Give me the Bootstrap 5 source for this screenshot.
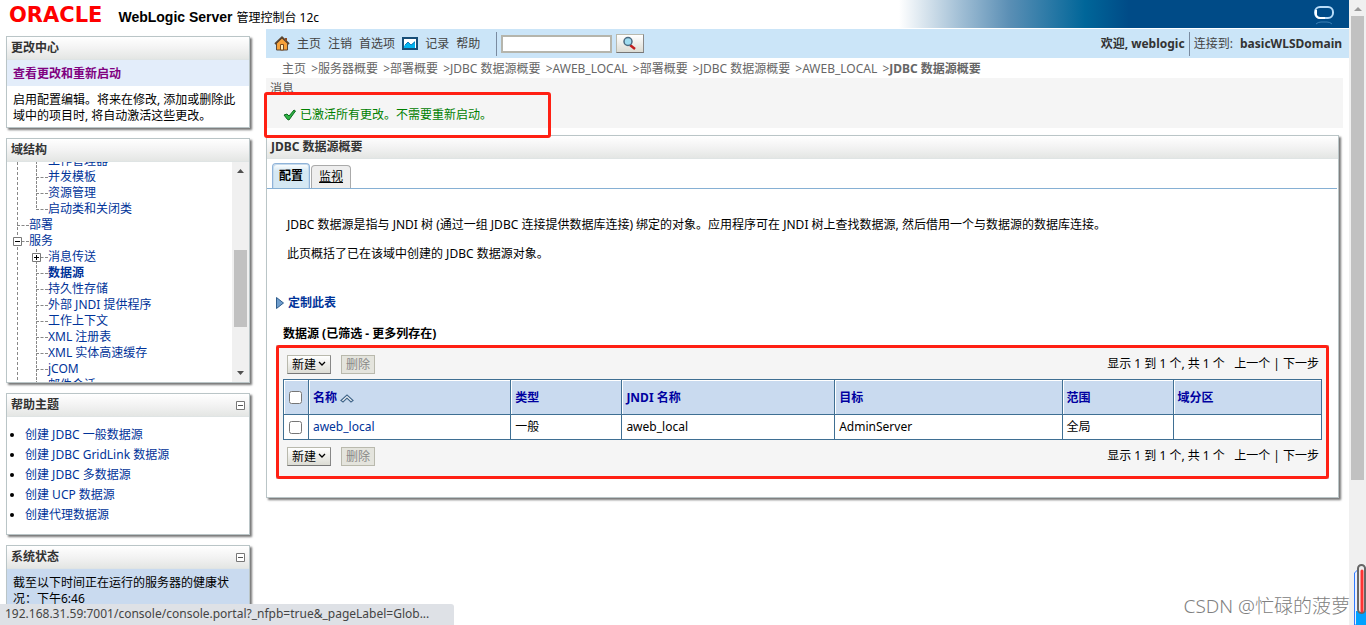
<!DOCTYPE html>
<html lang="zh-CN">
<head>
<meta charset="utf-8">
<meta name="viewport" content="width=device-width, initial-scale=1">
<title>JDBC 数据源概要 - WebLogic Server 管理控制台</title>
<link href="https://cdn.jsdelivr.net/npm/bootstrap@5.3.0/dist/css/bootstrap.min.css" rel="stylesheet">
<style>
  body { font: 12px/16px "Noto Sans", "Noto Sans CJK SC", sans-serif; color: #000; background: #fff; }
  a { color: #003399; text-decoration: none; }
  a:hover { text-decoration: underline; }
  svg { flex: none; }

  /* Brand bar */
  .brand-bar { height: 29px; border-bottom: 1px solid #fff; padding: 2px 14px 0 9px; gap: 16px;
    background: linear-gradient(to left, #004b87 0 220px, #006699 264px, #5b8fb5 340px, #a3c0d6 390px, #fff 450px); }
  .oracle-mark { font: bold 21px/26px "DejaVu Sans", sans-serif; color: #f00; }
  .product-name { font: bold 14px/26px "Liberation Sans", sans-serif; padding-top: 4px; }
  .product-name small { font: 12px/26px "Noto Sans", "Noto Sans CJK SC", sans-serif; }

  /* Panels */
  .side-col { width: 244px; margin-left: 6px; gap: 10px; padding-top: 7px; flex: none; }
  .panel { border: 1px solid #bac5c7; box-shadow: 2px 2px 2px #777; background: #fff; flex: none; }
  .panel-title { font-size: 12px; line-height: 16px; font-weight: bold; color: #333; margin: 0; padding: 3px 4px;
    background: linear-gradient(#fff, #f3f3f3 50%, #e4e6e4); border-bottom: 1px solid #dfe4e4; height: 23px; }
  .change-link { background: #e3edfa; padding: 6px 6px 4px; }
  .change-link a { color: #800080; font-weight: bold; }
  .change-note { padding: 6px 6px 3px; margin: 0; }

  /* Domain tree */
  .tree-box { height: 220px; overflow: hidden; }
  .tree-list { margin: 0; padding: 2px 0 0; list-style: none; min-width: 0;
    background: repeating-linear-gradient(#888 0 3px, transparent 3px 5px) 10px 0 / 1px 100% no-repeat; }
  .tree-row { height: 16px; flex: none; display: flex; align-items: center; white-space: nowrap; padding-left: 10px; }
  .tree-row::before { content: ""; width: 12px; border-top: 1px dashed #888; }
  .tree-row.sub { padding-left: 29px; background: repeating-linear-gradient(#888 0 3px, transparent 3px 4px) 29px 0 / 1px 16px no-repeat; }
  .tree-row.final { background-size: 1px 9px; }
  .tree-row svg { margin: 0 -5px 0 -4px; order: -1; z-index: 1; }
  .inner-scroll { width: 17px; background: #f0f0f0; padding: 6px 2px; flex: none; }
  .inner-thumb { height: 77px; margin: 77px 0 40px; background: #c1c1c1; }
  .help-list { margin: 0; padding: 8px 0 9px 18px; }
  .help-list li { line-height: 20px; }
  .help-list li::marker { font-size: 12px; }
  .status-body { background: #c9daef; padding: 6px; min-height: 90px; }

  /* Tool bar and location */
  .work-col { margin-left: 16px; min-width: 0; }
  .tool-bar { background: #cbe5f8; height: 29px; padding: 0 7px 0 8px; color: #444; }
  .tool-links { gap: 7px; }
  .tool-bar a { color: #444; }
  .tool-bar b { color: #333; }
  .bar-line { width: 1px; height: 24px; background: #7a8ba0; }
  .search-box { width: 111px; height: 18px; border: 2px solid #b5b5ac; padding: 0 2px; font-size: 12px; background: #fff; }
  .gray-btn { border: 1px solid #b9b9ad; border-right-color: #888; border-bottom-color: #777; background: linear-gradient(#fff, #dcdcd4);
    padding: 0 4px; font-size: 12px; line-height: 17px; height: 19px; color: #000; display: flex; align-items: center; gap: 2px; }
  .gray-btn:disabled { color: #888; background: #e4e4dd; border-color: #b9b9ad; }
  .crumbs { padding: 3px 16px 1px; color: #666; white-space: nowrap; overflow: hidden; }
  .crumbs a { color: #666; margin-right: 2px; }
  .messages { background: #f5f5f5; margin-right: 6px; height: 50px; padding: 3px 4px; color: #555; }
  .message-ok { color: #008000; padding: 10px 0 0 13px; gap: 4px; }
  .red-frame { border: 3px solid #ff2013; border-radius: 3px; pointer-events: none; }
  .frame-message { left: -2px; top: 14px; width: 287px; height: 46px; z-index: 2; }
  .frame-table { inset: -1px; }

  /* Data source panel */
  .main-panel { margin: 7px 10px 0 0; padding-bottom: 18px; }
  .tab-row { border-bottom: 1px solid #86b0d4; margin-right: 1px; padding-left: 5px; height: 30px; gap: 1px; }
  .tab-link { height: 23px; border: 1px solid #aaa; border-bottom: 0; border-radius: 4px 4px 0 0; background: #eee; padding: 3px 7px; color: #000; text-decoration: underline; }
  .tab-link.current { height: 25px; border-color: #8fb3d9; font-weight: bold; background: linear-gradient(#fff, #d5e8f3 30%); padding: 4px 6px 3px; text-decoration: none; box-shadow: inset 1px 1px #c5daec, inset -1px 0 #c5daec; }
  .intro { padding: 28px 20px 0; }
  .intro p { margin: 0 0 13px; }
  .custom-link { padding: 20px 0 0 9px; font-weight: bold; gap: 4px; }
  .table-name { margin: 15px 0 3px 16px; font-weight: bold; }
  .table-zone { margin: 0 9px; background: #f5f5f5; padding: 0 6px; border: 1px solid #ccc; }
  .table-tools { height: 33px; padding: 3px 3px 0 4px; gap: 10px; }
  .table-zone table + .table-tools { height: 38px; padding: 0 3px 6px 4px; }
  .grid-data { table-layout: fixed; width: 100%; border-collapse: collapse; background: #fff; }
  .grid-data th, .grid-data td { border: 1px solid #3f6f93; padding: 0 4px; white-space: nowrap; overflow: hidden; }
  .grid-data th { height: 35px; background: #c9daef; padding-top: 2px; box-shadow: inset 1px 1px #fff; }
  .grid-data th, .grid-data th a { color: #0000a0; }
  .grid-data td { height: 25px; }
  .grid-data .check-cell { padding: 0; text-align: center; }
  .grid-data input { width: 13px; height: 13px; vertical-align: middle; margin: 0; }

  /* Window furniture */
  .page-scroll { width: 17px; background: #f0f0f0; padding-top: 7px; flex: none; }
  .page-thumb { width: 13px; height: 75%; margin-top: 5px; background: #c1c1c1; }
  .status-bubble { left: 0; bottom: 0; width: 454px; height: 21px; background: #dee1e6; color: #444; border-top-right-radius: 3px; padding: 1px 5px;
    font: 12px/18px "Noto Sans", sans-serif; white-space: nowrap; z-index: 3; }
  .watermark { right: 16px; bottom: 6px; font: 300 19px/26px "Noto Sans", "Noto Sans CJK SC", sans-serif; color: #808080; }
  .side-widget { right: 0; bottom: 0; }
</style>
</head>
<body class="vh-100 overflow-hidden">
<div class="d-flex vh-100 position-relative">
  <div class="flex-fill overflow-hidden">
    <header class="brand-bar d-flex align-items-center">
      <span class="oracle-mark">ORACLE</span>
      <span class="product-name">WebLogic Server <small>管理控制台 12c</small></span>
      <svg class="ms-auto" width="22" height="22" viewBox="0 0 22 22" fill="none"><rect x="2" y="3" width="18" height="11" rx="5" stroke="#b9dcf8" stroke-width="2"/><path d="M3 6v5q1 3 4 3h5" stroke="#fff" stroke-width="2"/><path d="M3 20q2-2 5-2h6q3 0 5 2" stroke="#3a80b5"/></svg>
    </header>
    <div class="d-flex">
      <aside class="side-col d-flex flex-column">
        <section class="panel">
          <h2 class="panel-title">更改中心</h2>
          <div class="change-link"><a href="#">查看更改和重新启动</a></div>
          <p class="change-note">启用配置编辑。将来在修改, 添加或删除此域中的项目时, 将自动激活这些更改。</p>
        </section>
        <section class="panel">
          <h2 class="panel-title">域结构</h2>
          <div class="tree-box d-flex">
            <ul class="tree-list flex-fill d-flex flex-column justify-content-center">
              <li class="tree-row sub"><a href="#">工作管理器</a></li>
              <li class="tree-row sub"><a href="#">并发模板</a></li>
              <li class="tree-row sub"><a href="#">资源管理</a></li>
              <li class="tree-row sub final"><a href="#">启动类和关闭类</a></li>
              <li class="tree-row"><a href="#">部署</a></li>
              <li class="tree-row"><svg width="9" height="9"><path d="M.5.5h8v8h-8z" fill="#fff" stroke="#777"/><path d="M2 4.5h5" stroke="#000"/></svg><a href="#">服务</a></li>
              <li class="tree-row sub"><svg width="9" height="9"><path d="M.5.5h8v8h-8z" fill="#fff" stroke="#777"/><path d="M2 4.5h5M4.500 2v5" stroke="#000"/></svg><a href="#">消息传送</a></li>
              <li class="tree-row sub"><a href="#"><b>数据源</b></a></li>
              <li class="tree-row sub"><a href="#">持久性存储</a></li>
              <li class="tree-row sub"><a href="#">外部 JNDI 提供程序</a></li>
              <li class="tree-row sub"><a href="#">工作上下文</a></li>
              <li class="tree-row sub"><a href="#">XML 注册表</a></li>
              <li class="tree-row sub"><a href="#">XML 实体高速缓存</a></li>
              <li class="tree-row sub"><a href="#">jCOM</a></li>
              <li class="tree-row sub"><a href="#">邮件会话</a></li>
            </ul>
            <div class="inner-scroll d-flex flex-column">
              <svg class="mx-auto" width="7" height="5"><path d="M0 5 3.500 1 7 5z" fill="#505050"/></svg>
              <div class="inner-thumb"></div>
              <svg class="mx-auto mt-auto" width="7" height="5"><path d="M0 0h7L3.500 4z" fill="#505050"/></svg>
            </div>
          </div>
        </section>
        <section class="panel">
          <h2 class="panel-title d-flex justify-content-between">帮助主题<svg class="mt-1" width="9" height="9"><path d="M.5.5h8v8h-8z" fill="#fff" stroke="#777"/><path d="M2 4.500h5" stroke="#555"/></svg></h2>
          <ul class="help-list">
            <li><a href="#">创建 JDBC 一般数据源</a></li>
            <li><a href="#">创建 JDBC GridLink 数据源</a></li>
            <li><a href="#">创建 JDBC 多数据源</a></li>
            <li><a href="#">创建 UCP 数据源</a></li>
            <li><a href="#">创建代理数据源</a></li>
          </ul>
        </section>
        <section class="panel">
          <h2 class="panel-title d-flex justify-content-between">系统状态<svg class="mt-1" width="9" height="9"><path d="M.5.5h8v8h-8z" fill="#fff" stroke="#777"/><path d="M2 4.500h5" stroke="#555"/></svg></h2>
          <div class="status-body">截至以下时间正在运行的服务器的健康状况：下午6:46</div>
        </section>
      </aside>

      <main class="work-col flex-fill">
        <nav class="tool-bar d-flex align-items-center">
          <div class="tool-links d-flex align-items-center">
            <svg width="16" height="15" viewBox="0 0 16 15"><path d="M2.500 7v7h11V7L8 2z" fill="#f7a23b" stroke="#5b4a3a"/><path d="M1 8 8 1.300 15 8" fill="none" stroke="#5a4632" stroke-width="1.800"/><path d="M12 2v3" stroke="#8a4b25" stroke-width="2"/><path d="M6.500 14V8.500h3V14z" fill="#fff0c0" stroke="#7b4a1e"/></svg>
            <a href="#">主页</a><a href="#">注销</a><a href="#">首选项</a>
            <a class="d-flex align-items-center" href="#"><svg class="me-1" width="16" height="13"><path d="M1 1h14v11H1z" fill="#fff" stroke="#174e78" stroke-width="2"/><path d="M2 9 6 5l3 3 4-4v7H2z" fill="#00b4f0"/><path d="m3 8 3-3 3 3 4-3" fill="none" stroke="#1679b8"/></svg>&nbsp;记录</a>
            <a href="#">帮助</a>
          </div>
          <span class="bar-line me-1 ms-3"></span>
          <input class="search-box" type="text" aria-label="搜索">
          <button class="gray-btn ms-1" type="button" aria-label="搜索"><svg width="18" height="15"><path d="m9 9 5 4" stroke="#c21c1c" stroke-width="2.500"/><circle cx="7" cy="5.500" r="4" fill="#9fdcf0" stroke="#4b6a80" stroke-width="1.500"/></svg></button>
          <span class="ms-auto"><b>欢迎, weblogic</b></span>
          <span class="bar-line mx-1"></span>
          <span>连接到: <b class="ms-1">basicWLSDomain</b></span>
        </nav>
        <div class="crumbs"><a href="#">主页</a> &gt;<a href="#">服务器概要</a> &gt;<a href="#">部署概要</a> &gt;<a href="#">JDBC 数据源概要</a> &gt;<a href="#">AWEB_LOCAL</a> &gt;<a href="#">部署概要</a> &gt;<a href="#">JDBC 数据源概要</a> &gt;<a href="#">AWEB_LOCAL</a> &gt;<b>JDBC 数据源概要</b></div>
        <section class="messages position-relative">
          <div>消息</div>
          <div class="message-ok d-flex align-items-center"><svg width="13" height="12"><path d="m1 6 3-1 2 2 5-6 1.500 1L6 11 4.500 10.500z" fill="#2fb344" stroke="#0b6a1e"/></svg>已激活所有更改。不需要重新启动。</div>
          <div class="red-frame frame-message position-absolute"></div>
        </section>

        <section class="panel main-panel">
          <h1 class="panel-title">JDBC 数据源概要</h1>
          <div class="tab-row d-flex align-items-end"><a class="tab-link current" href="#">配置</a><a class="tab-link" href="#">监视</a></div>
          <div class="intro">
            <p>JDBC 数据源是指与 JNDI 树 (通过一组 JDBC 连接提供数据库连接) 绑定的对象。应用程序可在 JNDI 树上查找数据源, 然后借用一个与数据源的数据库连接。</p>
            <p>此页概括了已在该域中创建的 JDBC 数据源对象。</p>
          </div>
          <div class="custom-link d-flex align-items-center"><svg width="8" height="12"><path d="M.5.500 7.500 6 .5 11.500z" fill="#6f9dcc" stroke="#2f5d8c"/></svg><a href="#">定制此表</a></div>
          <div class="table-name">数据源 (已筛选 - 更多列存在)</div>
          <div class="table-zone position-relative">
            <div class="table-tools d-flex align-items-center">
              <button class="gray-btn" type="button">新建<svg width="8" height="6"><path d="m1 1 3 3 3-3" fill="none" stroke="#000" stroke-width="1.300"/></svg></button>
              <button class="gray-btn" type="button" disabled>删除</button>
              <span class="ms-auto">显示 1 到 1 个, 共 1 个 &nbsp; 上一个 | 下一步</span>
            </div>
            <table class="grid-data">
              <colgroup><col style="width:2.400%"><col style="width:19.500%"><col style="width:10.700%"><col style="width:20.500%"><col style="width:21.900%"><col style="width:10.700%"><col></colgroup>
              <thead><tr>
                <th class="check-cell"><input type="checkbox" aria-label="全选"></th>
                <th><a href="#">名称 <svg width="14" height="9"><path d="M1 6.500 7 1l6 5.500-2 1.500-4-4-4 4z" fill="#fff" stroke="#44688c" stroke-width="1.200"/></svg></a></th>
                <th>类型</th><th>JNDI 名称</th><th>目标</th><th>范围</th><th>域分区</th>
              </tr></thead>
              <tbody><tr>
                <td class="check-cell"><input type="checkbox" aria-label="aweb_local"></td>
                <td><a href="#">aweb_local</a></td><td>一般</td><td>aweb_local</td><td>AdminServer</td><td>全局</td><td></td>
              </tr></tbody>
            </table>
            <div class="table-tools d-flex align-items-center">
              <button class="gray-btn" type="button">新建<svg width="8" height="6"><path d="m1 1 3 3 3-3" fill="none" stroke="#000" stroke-width="1.300"/></svg></button>
              <button class="gray-btn" type="button" disabled>删除</button>
              <span class="ms-auto">显示 1 到 1 个, 共 1 个 &nbsp; 上一个 | 下一步</span>
            </div>
            <div class="red-frame frame-table position-absolute"></div>
          </div>
        </section>
      </main>
    </div>
  </div>
  <div class="page-scroll">
    <svg class="d-block mx-auto" width="8" height="4"><path d="M0 4 4 0l4 4z" fill="#9a9a9a"/></svg>
    <div class="page-thumb mx-auto"></div>
  </div>
  <div class="watermark position-absolute">CSDN @忙碌的菠萝</div>
  <svg class="side-widget position-absolute" width="12" height="62" viewBox="0 0 12 62"><path d="M.5 62V10l5-5H12v57z" fill="#e8efff" stroke="#2f7bff"/><path d="M2 48h10v14H2z" fill="#00a2ff"/><rect x="4" y="2" width="7" height="48" rx="3.500" fill="#eee" stroke="#666" stroke-width="2"/><path d="M8 8v40" stroke="#f33" stroke-width="3" stroke-linecap="round"/></svg>
  <div class="status-bubble position-absolute">192.168.31.59:7001/console/console.portal?_nfpb=true&amp;_pageLabel=Glob...</div>
</div>
<script src="https://cdn.jsdelivr.net/npm/bootstrap@5.3.0/dist/js/bootstrap.bundle.min.js"></script>
</body>
</html>
